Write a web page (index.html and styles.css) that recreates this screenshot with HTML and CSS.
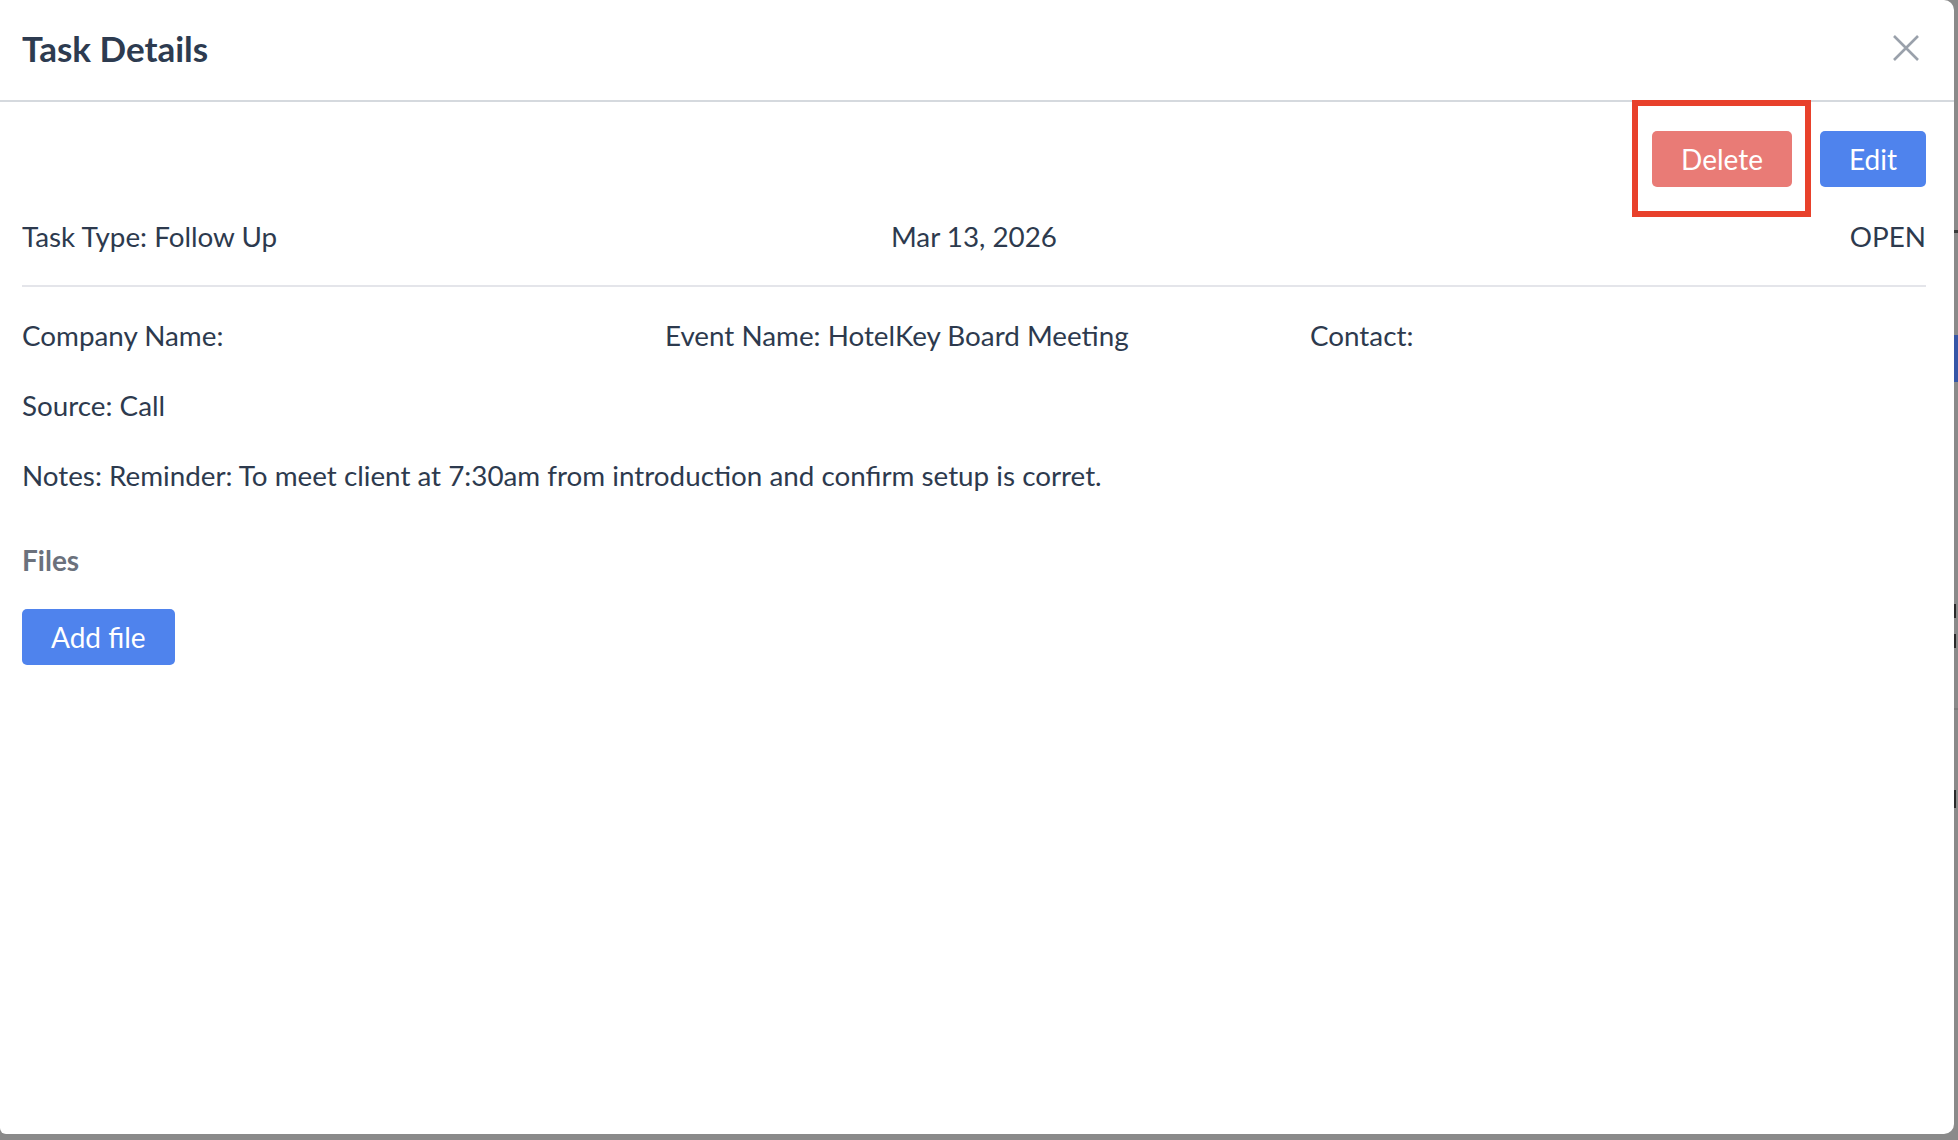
FILE: index.html
```html
<!DOCTYPE html>
<html>
<head>
<meta name="viewport" content="width=device-width, initial-scale=1.0">
<link rel="stylesheet" href="styles.css">
</head>
<body>
  <div class="screen">
    <div class="modal">
      <div class="modal-header">
        <h2 class="modal-title">Task Details</h2>
        <button class="close-btn" aria-label="Close">
          <svg width="26" height="26" viewBox="0 0 26 26">
            <path d="M1 1 L25 25 M25 1 L1 25" stroke="#9aa1ab" stroke-width="2.6" fill="none"/>
          </svg>
        </button>
      </div>

      <div class="modal-body">
        <div class="actions">
          <button class="btn btn-delete">Delete</button>
          <button class="btn btn-blue">Edit</button>
        </div>

        <div class="summary">
          <div>Task Type: Follow Up</div>
          <div class="center">Mar 13, 2026</div>
          <div class="right">OPEN</div>
        </div>

        <div class="details">
          <div class="detail-row cols">
            <div>Company Name:</div>
            <div>Event Name: HotelKey Board Meeting</div>
            <div>Contact:</div>
          </div>
          <div class="detail-row">Source: Call</div>
          <div class="detail-row">Notes: Reminder: To meet client at 7:30am from introduction and confirm setup is corret.</div>
        </div>

        <h3 class="files-title">Files</h3>
        <button class="btn btn-blue">Add file</button>
      </div>

      <!-- highlight around the delete action -->
      <div class="highlight"></div>
    </div>

    <!-- sliver of the page behind the backdrop -->
    <div class="page-edge">
      <div class="edge-mark"></div>
      <div class="edge-button"></div>
      <div class="edge-glyph first"></div>
      <div class="edge-glyph"></div>
      <div class="edge-line"></div>
      <div class="edge-glyph last"></div>
    </div>
  </div>
</body>
</html>
```

FILE: styles.css
```css
* {box-sizing: border-box;}

body {
  margin: 0;
  background: #8a8a8a;
  font-family: "Lato", "Liberation Sans", sans-serif;
  color: #2d3a4e;
}

.screen {
  display: flex;
  width: 1958px;
  height: 1140px;
  overflow: hidden;
}

.modal {
  position: relative;
  width: 1954px;
  height: 1134px;
  flex-shrink: 0;
  background: #fff;
  border-radius: 0 10px 10px 6px;
}

.modal-header {
  display: flex;
  justify-content: space-between;
  align-items: center;
  height: 102px;
  padding: 0 35px 4px 22px;
  border-bottom: 2px solid #d5d9de;
}

.modal-title {
  margin: 0 0 1px;
  font-size: 35px;
  font-weight: 700;
  color: #2d3b50;
}

.close-btn {
  border: none;
  background: none;
  padding: 0;
  width: 26px;
  height: 26px;
  display: flex;
}

.modal-body {
  padding: 29px 28px 0 22px;
}

.actions {
  display: flex;
  justify-content: flex-end;
  gap: 28px;
}

.btn {
  display: inline-flex;
  align-items: center;
  justify-content: center;
  height: 56px;
  padding: 0 29px;
  border: none;
  border-radius: 5px;
  font-family: inherit;
  font-size: 28px;
  color: #fff;
}

.btn-delete {
  background: #e97b76;
}

.btn-blue {
  background: #4f83ed;
}

.summary {
  display: grid;
  grid-template-columns: 1fr 1fr 1fr;
  margin-top: 34px;
  padding-bottom: 32px;
  border-bottom: 2px solid #e4e5ea;
  font-size: 27.8px;
  line-height: 32px;
}

.center {
  text-align: center;
}

.right {
  text-align: right;
}

.details {
  display: flex;
  flex-direction: column;
  gap: 38px;
  margin-top: 33px;
  font-size: 27.8px;
  line-height: 32px;
}

.cols {
  display: grid;
  grid-template-columns: 643px 645px 1fr;
}

.files-title {
  margin: 51px 0 0;
  font-size: 28px;
  line-height: 34px;
  font-weight: 700;
  color: #6b717c;
}

.files-title + .btn {
  margin-top: 32px;
}

.highlight {
  position: absolute;
  left: 1632px;
  top: 100px;
  width: 179px;
  height: 117px;
  border: 6px solid #e8412b;
}

.page-edge {
  flex: 1;
  display: flex;
  flex-direction: column;
  padding-top: 230px;
}

.edge-mark {
  height: 3px;
  background: #3a3a3a;
}

.edge-button {
  height: 47px;
  margin-top: 102px;
  background: #3656a6;
}

.edge-glyph {
  width: 2px;
  height: 14px;
  margin-top: 16px;
  background: #2a2a2a;
}

.edge-glyph.first {
  margin-top: 222px;
}

.edge-line {
  height: 2px;
  margin-top: 60px;
  background: #7c7c7c;
}

.edge-glyph.last {
  height: 18px;
  margin-top: 80px;
}
```
